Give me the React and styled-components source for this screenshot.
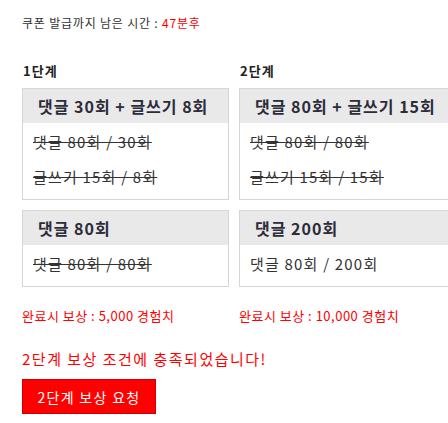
import React from "react";
import styled, { createGlobalStyle } from "styled-components";

const Global = createGlobalStyle`
  html, body {
    margin: 0;
    padding: 0;
    background: #fff;
    overflow: hidden;
  }
  body {
    font-family: "Noto Sans CJK KR", "Noto Sans", sans-serif;
    color: #333;
  }
`;

const Page = styled.div`
  width: 470px;
  padding: 14px 0 0 22px;
`;

const Timer = styled.p`
  margin: 0;
  font-size: 12px;
  line-height: 18px;
  letter-spacing: 0.8px;
  color: #333;
  span {
    color: #f00;
  }
`;

const Columns = styled.div`
  display: grid;
  grid-template-columns: 207px 220px;
  column-gap: 10px;
  margin-top: 31px;
`;

const Column = styled.div`
  display: flex;
  flex-direction: column;
`;

const StepTitle = styled.h3`
  margin: 0 0 9px 1px;
  font-size: 13px;
  line-height: 16px;
  letter-spacing: 1px;
  font-weight: 700;
  color: #222;
`;

const Card = styled.div`
  border: 1px solid #d6d6d6;
  margin-bottom: 10px;
  background: #fff;
`;

const CardHead = styled.div`
  background: #e9e9e9;
  height: 34px;
  padding: 0 15px;
  display: flex;
  align-items: center;
  font-size: 16px;
  font-weight: 700;
  letter-spacing: 1px;
  color: #2c2c3a;
  white-space: nowrap;
`;

const CardBody = styled.div`
  padding: 1px 10px 5px;
`;

const Row = styled.div`
  font-size: 15px;
  line-height: 35px;
  letter-spacing: 1.2px;
  color: #333;
  white-space: nowrap;
  text-decoration: ${(p) => (p.$done ? "line-through" : "none")};
`;

const Reward = styled.p`
  margin: 10px 0 0;
  font-size: 13px;
  line-height: 18px;
  letter-spacing: 0.5px;
  color: #f00;
  white-space: nowrap;
`;

const Notice = styled.p`
  margin: 24px 0 0;
  font-size: 15px;
  line-height: 20px;
  letter-spacing: 1.5px;
  color: #f00;
`;

const Button = styled.button`
  margin-top: 10px;
  width: 134px;
  height: 35px;
  background: #f00;
  border: 1px solid #c00;
  color: #fff;
  font-family: inherit;
  font-size: 14px;
  letter-spacing: 1.3px;
  padding: 0;
  cursor: pointer;
`;

const steps = [
  {
    title: "1단계",
    cards: [
      {
        head: "댓글 30회 + 글쓰기 8회",
        rows: [
          { text: "댓글 80회 / 30회", done: true },
          { text: "글쓰기 15회 / 8회", done: true },
        ],
      },
      {
        head: "댓글 80회",
        rows: [{ text: "댓글 80회 / 80회", done: true }],
      },
    ],
    reward: "완료시 보상 : 5,000 경험치",
  },
  {
    title: "2단계",
    cards: [
      {
        head: "댓글 80회 + 글쓰기 15회",
        rows: [
          { text: "댓글 80회 / 80회", done: true },
          { text: "글쓰기 15회 / 15회", done: true },
        ],
      },
      {
        head: "댓글 200회",
        rows: [{ text: "댓글 80회 / 200회", done: false }],
      },
    ],
    reward: "완료시 보상 : 10,000 경험치",
  },
];

export default function App() {
  return (
    <Page>
      <Global />
      <Timer>
        쿠폰 발급까지 남은 시간 : <span>47분후</span>
      </Timer>
      <Columns>
        {steps.map((step) => (
          <Column key={step.title}>
            <StepTitle>{step.title}</StepTitle>
            {step.cards.map((card) => (
              <Card key={card.head}>
                <CardHead>{card.head}</CardHead>
                <CardBody>
                  {card.rows.map((r) => (
                    <Row key={r.text} $done={r.done}>
                      {r.text}
                    </Row>
                  ))}
                </CardBody>
              </Card>
            ))}
            <Reward>{step.reward}</Reward>
          </Column>
        ))}
      </Columns>
      <Notice>2단계 보상 조건에 충족되었습니다!</Notice>
      <Button>2단계 보상 요청</Button>
    </Page>
  );
}
